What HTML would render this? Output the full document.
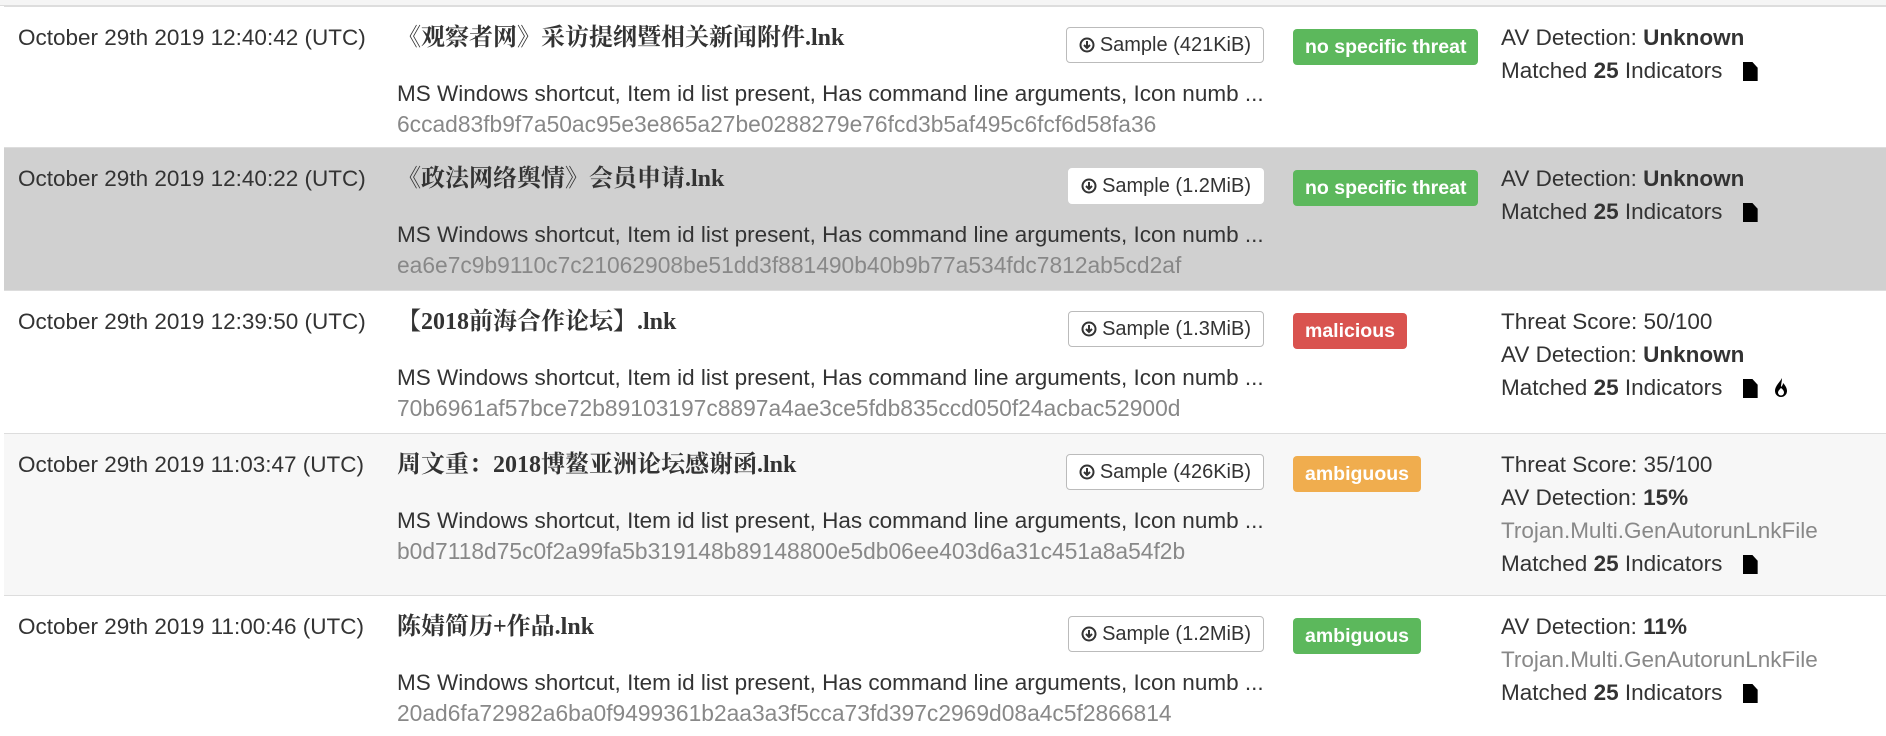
<!DOCTYPE html>
<html><head><meta charset="utf-8"><style>
body{margin:0;width:1886px;height:735px;overflow:hidden;background:#fff;font-family:"Liberation Sans","Noto Sans CJK SC",sans-serif;color:#333;font-size:22.5px;letter-spacing:0;position:relative}
.row{position:absolute;left:4px;right:0;border-top:1px solid #ddd}
.t{position:absolute;white-space:nowrap;line-height:26px}
.date{left:14px}
.title{left:393px;font-weight:bold;font-family:"Liberation Serif","Noto Serif CJK SC",serif;font-size:24px}
.desc{left:393px;width:875px;overflow:hidden}
.hash{left:393px;color:#888;font-size:22.8px}
.btn{position:absolute;right:622px;height:34px;border:1px solid #bbb;border-radius:4px;background:#fff;font-size:20px;line-height:34px;padding:0 12px;white-space:nowrap;color:#333}
.btn svg{vertical-align:-2px;margin-right:5px}
.badge{position:absolute;left:1289px;height:36px;line-height:36px;padding:0 12px;border-radius:4px;color:#fff;font-weight:bold;font-size:19.5px;white-space:nowrap}
.g{background:#5cb85c}.r{background:#d9534f}.o{background:#f0ad4e}
.rc{left:1497px}
.muted{color:#888}
.doc{display:inline-block;width:15px;height:19px;background:#000;vertical-align:-3px;margin-left:14px;clip-path:polygon(0 0,65% 0,100% 30%,100% 100%,0 100%)}
</style></head><body>
<div style="position:absolute;left:0;right:0;top:0;height:5px;background:#f5f5f5;border-bottom:1px solid #ddd"></div>

<div class="row" style="top:6px;height:141px;background:#fff">
<div class="t date" style="top:18px">October 29th 2019 12:40:42 (UTC)</div>
<div class="t title" style="top:18px">《观察者网》采访提纲暨相关新闻附件.lnk</div>
<div class="t desc" style="top:74px">MS Windows shortcut, Item id list present, Has command line arguments, Icon numb ...</div>
<div class="t hash" style="top:104px">6ccad83fb9f7a50ac95e3e865a27be0288279e76fcd3b5af495c6fcf6d58fa36</div>
<div class="btn" style="top:20px"><svg width="16" height="16" viewBox="0 0 16 16"><circle cx="8" cy="8" r="6.5" fill="none" stroke="#333" stroke-width="2"/><path d="M8 4v6M5 8l3 3 3-3" stroke="#333" stroke-width="2" fill="none"/></svg>Sample (421KiB)</div>
<div class="badge g" style="top:22px">no specific threat</div>
<div class="t rc" style="top:18px">AV Detection: <b>Unknown</b></div>
<div class="t rc" style="top:51px">Matched <b>25</b> Indicators <span class="doc"></span></div>
</div>

<div class="row" style="top:147px;height:143px;background:#d0d0d0">
<div class="t date" style="top:18px">October 29th 2019 12:40:22 (UTC)</div>
<div class="t title" style="top:18px">《政法网络舆情》会员申请.lnk</div>
<div class="t desc" style="top:74px">MS Windows shortcut, Item id list present, Has command line arguments, Icon numb ...</div>
<div class="t hash" style="top:104px">ea6e7c9b9110c7c21062908be51dd3f881490b40b9b77a534fdc7812ab5cd2af</div>
<div class="btn" style="top:20px;border-color:#fff"><svg width="16" height="16" viewBox="0 0 16 16"><circle cx="8" cy="8" r="6.5" fill="none" stroke="#333" stroke-width="2"/><path d="M8 4v6M5 8l3 3 3-3" stroke="#333" stroke-width="2" fill="none"/></svg>Sample (1.2MiB)</div>
<div class="badge g" style="top:22px">no specific threat</div>
<div class="t rc" style="top:18px">AV Detection: <b>Unknown</b></div>
<div class="t rc" style="top:51px">Matched <b>25</b> Indicators <span class="doc"></span></div>
</div>

<div class="row" style="top:290px;height:143px;background:#fff">
<div class="t date" style="top:18px">October 29th 2019 12:39:50 (UTC)</div>
<div class="t title" style="top:18px">【2018前海合作论坛】.lnk</div>
<div class="t desc" style="top:74px">MS Windows shortcut, Item id list present, Has command line arguments, Icon numb ...</div>
<div class="t hash" style="top:104px">70b6961af57bce72b89103197c8897a4ae3ce5fdb835ccd050f24acbac52900d</div>
<div class="btn" style="top:20px"><svg width="16" height="16" viewBox="0 0 16 16"><circle cx="8" cy="8" r="6.5" fill="none" stroke="#333" stroke-width="2"/><path d="M8 4v6M5 8l3 3 3-3" stroke="#333" stroke-width="2" fill="none"/></svg>Sample (1.3MiB)</div>
<div class="badge r" style="top:22px">malicious</div>
<div class="t rc" style="top:18px">Threat Score: 50/100</div>
<div class="t rc" style="top:51px">AV Detection: <b>Unknown</b></div>
<div class="t rc" style="top:84px">Matched <b>25</b> Indicators <span class="doc"></span><svg style="margin-left:16px;vertical-align:-4px" width="14" height="22" viewBox="0 0 14 22"><path d="M8 1C6 5 1 9 1 14a6 6 0 0 0 12 0c0-3-2-6-4-8 0 2-1 3-2 4 0-3 1-6 1-9z" fill="#000"/><path d="M7 11c-1 1-3 3-3 4.5a3 3 0 0 0 6 0c0-1.5-1-3-3-4.5z" fill="#fff"/></svg></div>
</div>

<div class="row" style="top:433px;height:162px;background:#f7f7f7">
<div class="t date" style="top:18px">October 29th 2019 11:03:47 (UTC)</div>
<div class="t title" style="top:18px">周文重：2018博鳌亚洲论坛感谢函.lnk</div>
<div class="t desc" style="top:74px">MS Windows shortcut, Item id list present, Has command line arguments, Icon numb ...</div>
<div class="t hash" style="top:104px">b0d7118d75c0f2a99fa5b319148b89148800e5db06ee403d6a31c451a8a54f2b</div>
<div class="btn" style="top:20px"><svg width="16" height="16" viewBox="0 0 16 16"><circle cx="8" cy="8" r="6.5" fill="none" stroke="#333" stroke-width="2"/><path d="M8 4v6M5 8l3 3 3-3" stroke="#333" stroke-width="2" fill="none"/></svg>Sample (426KiB)</div>
<div class="badge o" style="top:22px">ambiguous</div>
<div class="t rc" style="top:18px">Threat Score: 35/100</div>
<div class="t rc" style="top:51px">AV Detection: <b>15%</b></div>
<div class="t rc muted" style="top:84px">Trojan.Multi.GenAutorunLnkFile</div>
<div class="t rc" style="top:117px">Matched <b>25</b> Indicators <span class="doc"></span></div>
</div>

<div class="row" style="top:595px;height:140px;background:#fff">
<div class="t date" style="top:18px">October 29th 2019 11:00:46 (UTC)</div>
<div class="t title" style="top:18px">陈婧简历+作品.lnk</div>
<div class="t desc" style="top:74px">MS Windows shortcut, Item id list present, Has command line arguments, Icon numb ...</div>
<div class="t hash" style="top:104px">20ad6fa72982a6ba0f9499361b2aa3a3f5cca73fd397c2969d08a4c5f2866814</div>
<div class="btn" style="top:20px"><svg width="16" height="16" viewBox="0 0 16 16"><circle cx="8" cy="8" r="6.5" fill="none" stroke="#333" stroke-width="2"/><path d="M8 4v6M5 8l3 3 3-3" stroke="#333" stroke-width="2" fill="none"/></svg>Sample (1.2MiB)</div>
<div class="badge g" style="top:22px">ambiguous</div>
<div class="t rc" style="top:18px">AV Detection: <b>11%</b></div>
<div class="t rc muted" style="top:51px">Trojan.Multi.GenAutorunLnkFile</div>
<div class="t rc" style="top:84px">Matched <b>25</b> Indicators <span class="doc"></span></div>
</div>
</body></html>
